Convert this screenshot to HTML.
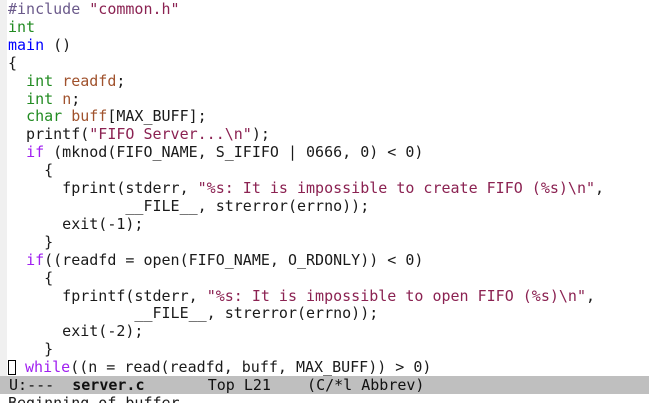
<!DOCTYPE html>
<html><head><meta charset="utf-8"><style>
html,body{margin:0;padding:0;width:649px;height:403px;overflow:hidden;background:#fff;}
body{font-family:"DejaVu Sans Mono","Liberation Mono",monospace;font-size:15px;color:#1a1a1a;position:relative;}
.fr{position:absolute;left:0;top:0;width:7px;height:376px;background:#f0f0f0;}
pre{margin:0;position:absolute;left:8px;top:1px;font:inherit;line-height:17.9px;white-space:pre;}
.pp{color:#6b5a8b}.s{color:#8b2252}.t{color:#228b22}.f{color:#0000ff}.v{color:#a0522d}.k{color:#a020f0}
.cur{display:inline-block;width:8px;height:15px;border:1px solid #000;vertical-align:-3px;margin-right:0;box-sizing:border-box;}
.ml{position:absolute;left:0;top:376px;width:649px;height:18px;background:#bfbfbf;line-height:18px;white-space:pre;color:#111;}
.mb{position:absolute;left:8px;top:394px;line-height:18px;white-space:pre;}
</style></head><body>
<div class="fr"></div>
<pre><span class="pp">#include</span> <span class="s">"common.h"</span>
<span class="t">int</span>
<span class="f">main</span> ()
{
  <span class="t">int</span> <span class="v">readfd</span>;
  <span class="t">int</span> <span class="v">n</span>;
  <span class="t">char</span> <span class="v">buff</span>[MAX_BUFF];
  printf(<span class="s">"FIFO Server...\n"</span>);
  <span class="k">if</span> (mknod(FIFO_NAME, S_IFIFO | 0666, 0) &lt; 0)
    {
      fprint(stderr, <span class="s">"%s: It is impossible to create FIFO (%s)\n"</span>,
             __FILE__, strerror(errno));
      exit(-1);
    }
  <span class="k">if</span>((readfd = open(FIFO_NAME, O_RDONLY)) &lt; 0)
    {
      fprintf(stderr, <span class="s">"%s: It is impossible to open FIFO (%s)\n"</span>,
              __FILE__, strerror(errno));
      exit(-2);
    }
<span class="cur"></span> <span class="k">while</span>((n = read(readfd, buff, MAX_BUFF)) &gt; 0)</pre>
<div class="ml"> U:---  <b>server.c</b>       Top L21    (C/*l Abbrev)</div>
<div class="mb">Beginning of buffer</div>
</body></html>
